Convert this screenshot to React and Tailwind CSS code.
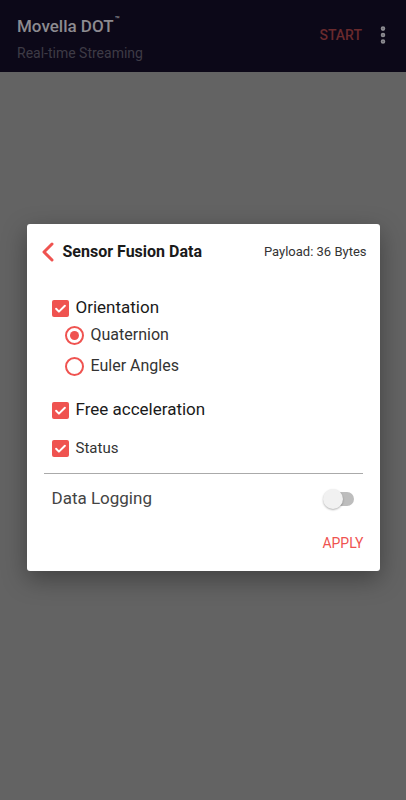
import { EllipsisVertical } from "lucide-react"

const Check = () => (
  <span className="flex h-[17px] w-[17px] items-center justify-center rounded-[2px] bg-[#ef5350]">
    <svg viewBox="0 0 24 24" className="h-[15px] w-[15px]" fill="none" stroke="white" strokeWidth={3.2} strokeLinecap="round" strokeLinejoin="round">
      <path d="M5 12.5l4.5 4.5L19 7.5" />
    </svg>
  </span>
)

const Radio = ({ on }) => (
  <span className="flex h-[19px] w-[19px] items-center justify-center rounded-full border-2 border-[#ef5350]">
    {on && <span className="h-[9px] w-[9px] rounded-full bg-[#ef5350]" />}
  </span>
)

export default function App() {
  return (
    <div className="flex h-[800px] w-[406px] flex-col bg-[#636363] font-['Roboto',sans-serif]">
      {/* app bar, dimmed by the dialog scrim */}
      <div className="flex h-[72px] items-start bg-[#0c0818] pl-[17px] pr-[12px]">
        <div className="flex flex-col pt-[15px]">
          <div className="flex items-start text-[17px] font-medium leading-[22px] text-[#8c8b90]">
            Movella DOT<span className="ml-[1px] text-[8px] leading-[10px]">™</span>
          </div>
          <div className="mt-[7px] text-[14px] leading-[18px] text-[#3e3b46]">Real-time Streaming</div>
        </div>
        <div className="ml-auto flex items-center gap-[10px] pt-[24px]">
          <span className="text-[14px] font-medium text-[#6a2a2d]">START</span>
          <EllipsisVertical className="h-[22px] w-[22px] text-[#8c8b90]" strokeWidth={3} />
        </div>
      </div>

      <div className="flex flex-1 items-start justify-center pt-[152px]">
        <div className="w-[353px] rounded-[3px] bg-white shadow-[0_8px_24px_rgba(0,0,0,0.35)]">
          <div className="flex items-center pl-[10px] pr-[13px] pt-[16px]">
            <svg viewBox="0 0 24 24" className="h-[24px] w-[24px]" fill="none" stroke="#ef5350" strokeWidth={3} strokeLinecap="round" strokeLinejoin="round">
              <path d="M15 4l-8 8 8 8" />
            </svg>
            <span className="ml-[2px] text-[16px] font-bold text-[#1a1a1a]">Sensor Fusion Data</span>
            <span className="ml-auto text-[13px] text-[#333]">Payload: 36 Bytes</span>
          </div>

          <div className="flex flex-col pl-[25px] pt-[33px]">
            <div className="flex h-[22px] items-center gap-[7px]">
              <Check />
              <span className="text-[17px] text-[#1a1a1a]">Orientation</span>
            </div>
            <div className="mt-[5px] flex h-[22px] items-center gap-[7px] pl-[13px]">
              <Radio on />
              <span className="text-[16px] text-[#333]">Quaternion</span>
            </div>
            <div className="mt-[9px] flex h-[22px] items-center gap-[7px] pl-[13px]">
              <Radio />
              <span className="text-[16px] text-[#333]">Euler Angles</span>
            </div>
            <div className="mt-[22px] flex h-[22px] items-center gap-[7px]">
              <Check />
              <span className="text-[17px] text-[#1a1a1a]">Free acceleration</span>
            </div>
            <div className="mt-[16px] flex h-[22px] items-center gap-[7px]">
              <Check />
              <span className="text-[15px] text-[#333]">Status</span>
            </div>
          </div>

          <div className="mx-[17px] mt-[14px] h-px bg-[#aaaaaa]" />

          <div className="flex items-center pl-[25px] pr-[26px] pt-[12px]">
            <span className="text-[17px] text-[#444]">Data Logging</span>
            <div className="relative ml-auto h-[14px] w-[30px] rounded-full bg-[#bdbdbd]">
              <span className="absolute -left-[1px] -top-[3px] h-[20px] w-[20px] rounded-full bg-[#f1f1f1] shadow-[0_1px_2px_rgba(0,0,0,0.3)]" />
            </div>
          </div>

          <div className="flex justify-end pr-[16px] pt-[21px] pb-[17px]">
            <span className="text-[14px] text-[#ef5350]">APPLY</span>
          </div>
        </div>
      </div>
    </div>
  )
}
